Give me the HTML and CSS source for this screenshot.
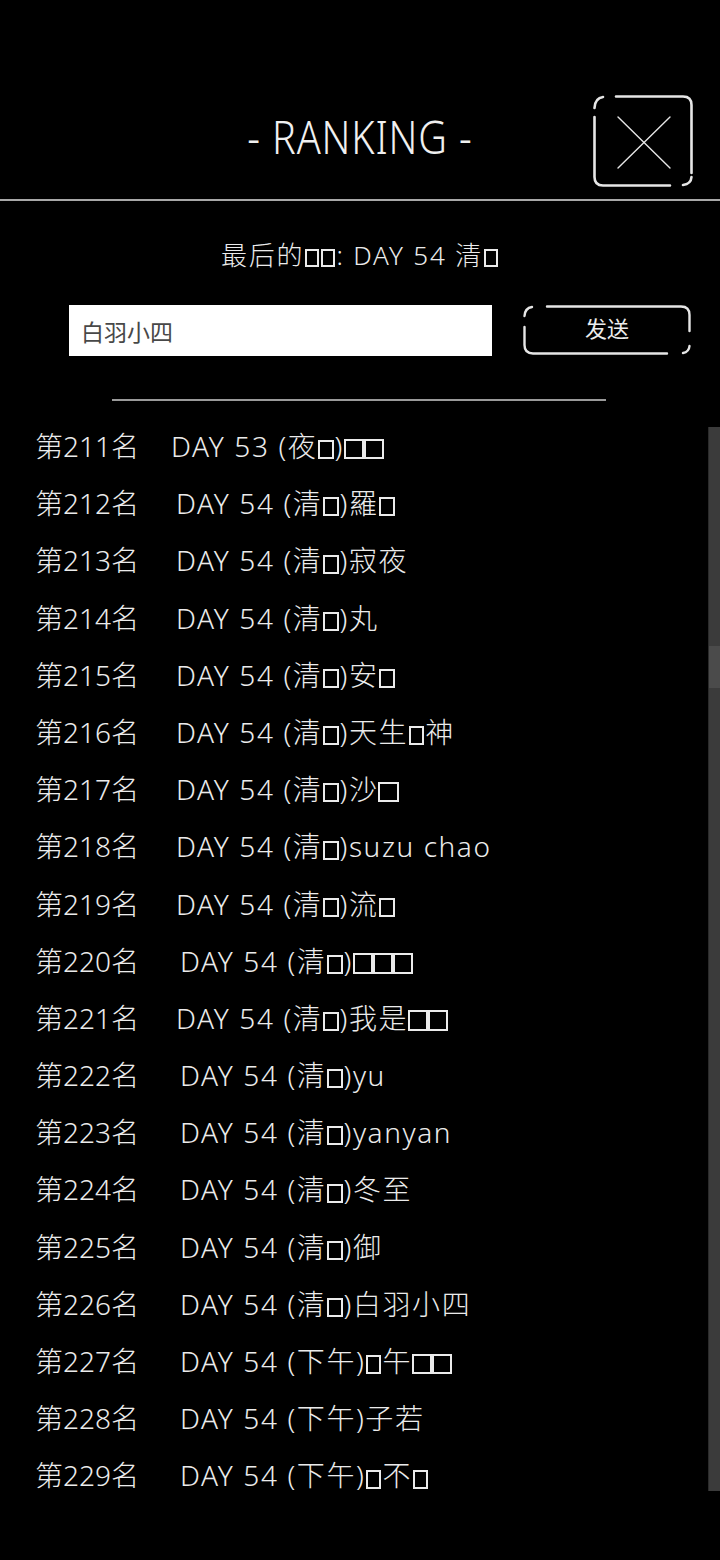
FILE: index.html
```html
<!DOCTYPE html>
<html lang="zh">
<head>
    <meta charset="UTF-8">
    <meta name="viewport" content="width=device-width, initial-scale=1.0">
    <title>RANKING</title>
    <link rel="stylesheet" href="styles.css">
</head>

<body>
    <!-- 标题栏 -->
    <header class="top-bar">
        <span></span>
        <h1 class="title">- RANKING -</h1>
        <button class="close-btn" type="button" aria-label="close">
            <svg width="100" height="92" viewBox="0 0 100 92" fill="none" stroke="#e6e6e6" stroke-linecap="round">
                <path d="M23 1.5 H90 Q98.5 1.5 98.5 10 V78" stroke-width="2.6"/>
                <path d="M1.5 22 V82 Q1.5 90.5 10 90.5 H77" stroke-width="2.6"/>
                <path d="M1.5 13 Q2 3 10 2" stroke-width="2.6"/>
                <path d="M98.5 82 Q98 89 90 90" stroke-width="2.6"/>
                <path d="M25 22 L77 73 M77 22 L25 73" stroke-width="1.4"/>
            </svg>
        </button>
    </header>

    <p class="last-info">最后的<span class="tofu"></span><span class="tofu"></span>: DAY 54 清<span class="tofu"></span></p>

    <!-- 名字输入 -->
    <form class="name-form">
        <input class="name-input" type="text" value="白羽小四">
        <button class="send-btn" type="button">
            <svg class="send-frame" width="168" height="50" viewBox="0 0 168 50" fill="none" stroke="#e6e6e6" stroke-width="2.4" stroke-linecap="round">
                <path d="M24 1.5 H158 Q166.5 1.5 166.5 10 V26"/>
                <path d="M1.5 22 V40 Q1.5 48.5 10 48.5 H144"/>
                <path d="M1.5 11 Q2 3 9 2"/>
                <path d="M166.5 41 Q166 47 160 48"/>
            </svg>
            <span class="send-text">发送</span>
        </button>
    </form>

    <hr class="divider">

    <!-- 排名列表 -->
    <section class="rank-area">
        <ul class="rank-list">
            <li><span class="rank">第211名</span><span class="entry narrow">DAY 53 (夜<span class="tofu"></span>)<span class="tofu big"></span><span class="tofu big"></span></span></li>
            <li><span class="rank">第212名</span><span class="entry">DAY 54 (清<span class="tofu"></span>)羅<span class="tofu"></span></span></li>
            <li><span class="rank">第213名</span><span class="entry">DAY 54 (清<span class="tofu"></span>)寂夜</span></li>
            <li><span class="rank">第214名</span><span class="entry">DAY 54 (清<span class="tofu"></span>)丸</span></li>
            <li><span class="rank">第215名</span><span class="entry">DAY 54 (清<span class="tofu"></span>)安<span class="tofu"></span></span></li>
            <li><span class="rank">第216名</span><span class="entry">DAY 54 (清<span class="tofu"></span>)天生<span class="tofu"></span>神</span></li>
            <li><span class="rank">第217名</span><span class="entry">DAY 54 (清<span class="tofu"></span>)沙<span class="tofu big"></span></span></li>
            <li><span class="rank">第218名</span><span class="entry">DAY 54 (清<span class="tofu"></span>)suzu chao</span></li>
            <li><span class="rank">第219名</span><span class="entry">DAY 54 (清<span class="tofu"></span>)流<span class="tofu"></span></span></li>
            <li><span class="rank">第220名</span><span class="entry wide">DAY 54 (清<span class="tofu"></span>)<span class="tofu big"></span><span class="tofu big"></span><span class="tofu big"></span></span></li>
            <li><span class="rank">第221名</span><span class="entry">DAY 54 (清<span class="tofu"></span>)我是<span class="tofu big"></span><span class="tofu big"></span></span></li>
            <li><span class="rank">第222名</span><span class="entry wide">DAY 54 (清<span class="tofu"></span>)yu</span></li>
            <li><span class="rank">第223名</span><span class="entry wide">DAY 54 (清<span class="tofu"></span>)yanyan</span></li>
            <li><span class="rank">第224名</span><span class="entry wide">DAY 54 (清<span class="tofu"></span>)冬至</span></li>
            <li><span class="rank">第225名</span><span class="entry wide">DAY 54 (清<span class="tofu"></span>)御</span></li>
            <li><span class="rank">第226名</span><span class="entry wide">DAY 54 (清<span class="tofu"></span>)白羽小四</span></li>
            <li><span class="rank">第227名</span><span class="entry wide">DAY 54 (下午)<span class="tofu"></span>午<span class="tofu big"></span><span class="tofu big"></span></span></li>
            <li><span class="rank">第228名</span><span class="entry wide">DAY 54 (下午)子若</span></li>
            <li><span class="rank">第229名</span><span class="entry wide">DAY 54 (下午)<span class="tofu"></span>不<span class="tofu"></span></span></li>
        </ul>
        <!-- 滚动条 -->
        <div class="scroll-track"><div class="scroll-thumb"></div></div>
    </section>
</body>
</html>
```

FILE: styles.css
```css
body {
    margin: 0;
    background: #000;
    color: #ebebeb;
    font-family: "Noto Sans", "Noto Sans CJK SC", sans-serif;
    font-weight: 300;
}

/* 标题栏 */
.top-bar {
    display: grid;
    grid-template-columns: 1fr auto 1fr;
    align-items: center;
    padding: 95px 27px 12px;
    border-bottom: 2px solid #a8a8a8;
}
.title {
    margin: 0 0 10px;
    font-size: 46px;
    font-weight: 300;
    letter-spacing: 1px;
    color: #f0f0f0;
    transform: scaleX(0.86);
}
.close-btn {
    justify-self: end;
    padding: 0;
    border: none;
    background: none;
    width: 100px;
    height: 92px;
}
.close-btn svg {
    display: block;
}

.last-info {
    margin: 36px 0 0;
    text-align: center;
    font-size: 26px;
    line-height: 36px;
    letter-spacing: 1.8px;
}

/* 表单 */
.name-form {
    display: flex;
    gap: 31px;
    margin: 32px 0 0 69px;
}
.name-input {
    width: 423px;
    height: 51px;
    box-sizing: border-box;
    border: none;
    padding: 0 12px;
    background: #fff;
    color: #484848;
    font-family: "Noto Sans CJK SC", sans-serif;
    font-size: 23px;
}
.send-btn {
    position: relative;
    width: 168px;
    height: 50px;
    padding: 0;
    border: none;
    background: none;
    color: #ececec;
    font-family: "Noto Sans CJK SC", sans-serif;
    font-size: 22px;
}
.send-frame {
    position: absolute;
    left: 0;
    top: 0;
}
.send-text {
    position: relative;
    top: -3px;
}

.divider {
    width: 494px;
    margin: 43px 0 0 112px;
    border: none;
    border-top: 2px solid #9a9a9a;
}

/* 排名 */
.rank-area {
    display: flex;
    margin-top: 26px;
}
.rank-list {
    flex: 1;
    list-style: none;
    margin: 0;
    padding: 0 0 0 35px;
    display: flex;
    flex-direction: column;
    gap: 19.2px;
}
.rank-list li {
    font-size: 28px;
    line-height: 38px;
    white-space: nowrap;
}
.entry {
    margin-left: 37px;
    letter-spacing: 1.6px;
}
.entry.narrow {
    margin-left: 32px;
}
.entry.wide {
    margin-left: 41px;
}

.tofu {
    display: inline-block;
    width: 0.54em;
    height: 0.68em;
    border: 2px solid #ebebeb;
    box-sizing: border-box;
    margin: 0 1px;
    vertical-align: -0.08em;
}
.tofu.big {
    width: 0.72em;
    height: 0.74em;
    margin: 0;
}

.scroll-track {
    width: 11px;
    height: 1064px;
    background: #3b3b3b;
    border-left: 1px solid #2a2a2a;
}
.scroll-thumb {
    margin-top: 219px;
    height: 42px;
    background: #4b4b4b;
}
```
